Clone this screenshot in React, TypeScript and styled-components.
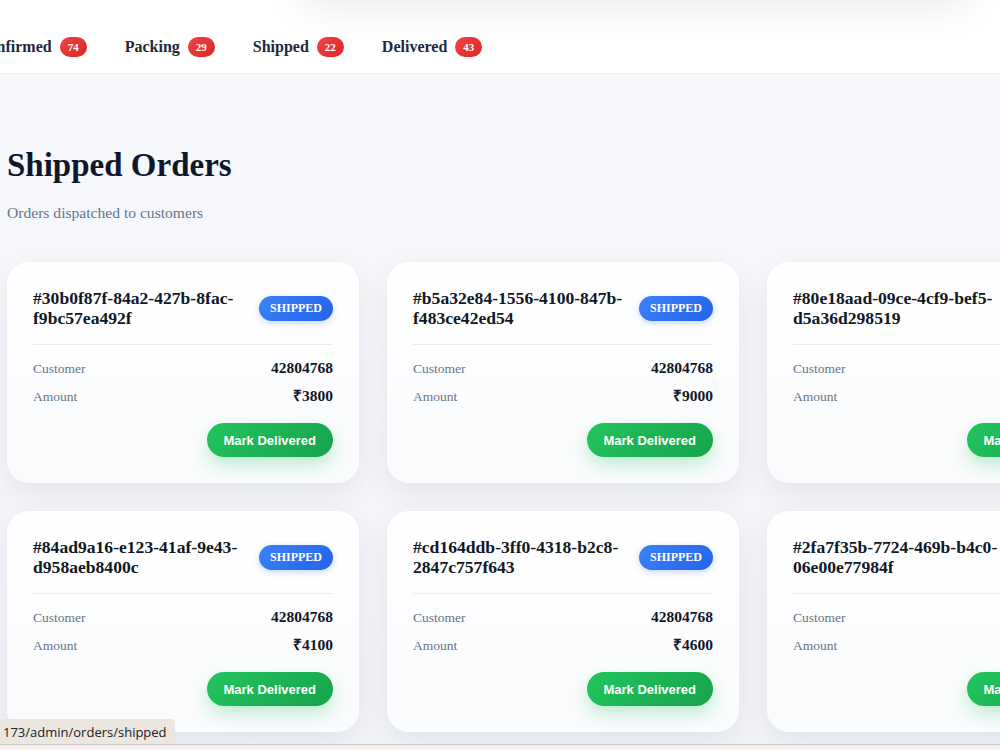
import styled, { createGlobalStyle } from "styled-components";

const GlobalStyle = createGlobalStyle`
  html, body {
    margin: 0;
    padding: 0;
    overflow: hidden;
    background: #f7f9fc;
    font-family: "Liberation Serif", "Times New Roman", serif;
  }
  * {
    box-sizing: border-box;
  }
`;

const Page = styled.div`
  min-height: 750px;
  background: linear-gradient(180deg, #f8f9fc 0%, #f2f4f8 100%);
`;

const TopNav = styled.nav`
  position: relative;
  height: 74px;
  background: #ffffff;
  border-bottom: 1px solid #eef0f3;
  display: flex;
  align-items: center;
  padding-top: 20px;
  overflow: hidden;

  /* shadow of the header card sitting above the tabs */
  &::before {
    content: "";
    position: absolute;
    top: -70px;
    left: 300px;
    right: 30px;
    height: 70px;
    border-radius: 24px;
    background: #ffffff;
    box-shadow: 0 6px 40px rgba(0, 0, 0, 0.09);
  }
`;

const TabStrip = styled.div`
  display: flex;
  align-items: center;
  gap: 38px;
  margin-left: -23px;
`;

const Tab = styled.div`
  display: flex;
  align-items: center;
  gap: 8px;
  font-size: 16px;
  font-weight: 700;
  color: #1e293b;
  white-space: nowrap;
`;

const CountBadge = styled.span`
  display: inline-flex;
  align-items: center;
  justify-content: center;
  height: 20px;
  min-width: 27px;
  padding: 0 6px;
  border-radius: 10px;
  background: linear-gradient(135deg, #ef4444, #dc2626);
  color: #ffffff;
  font-size: 11px;
  font-weight: 700;
`;

const Main = styled.main`
  padding: 72px 0 0 7px;
`;

const Title = styled.h1`
  margin: 0;
  font-size: 33px;
  line-height: 38px;
  font-weight: 700;
  color: #0f172a;
`;

const Subtitle = styled.p`
  margin: 20px 0 0;
  font-size: 15.6px;
  line-height: 18px;
  color: #64748b;
`;

const Grid = styled.div`
  margin-top: 40px;
  display: grid;
  grid-template-columns: repeat(3, 352px);
  gap: 28px;
`;

const Card = styled.div`
  background: linear-gradient(180deg, #ffffff 0%, #fafbfd 100%);
  border-radius: 22px;
  padding: 26px;
  box-shadow: 0 10px 30px rgba(15, 23, 42, 0.08);
  display: flex;
  flex-direction: column;
`;

const CardHeader = styled.div`
  display: flex;
  justify-content: space-between;
  align-items: center;
  gap: 14px;
  padding-bottom: 16px;
  border-bottom: 1px solid #e8ecf1;
`;

const OrderId = styled.div`
  flex: 1;
  font-size: 17.6px;
  line-height: 20px;
  font-weight: 700;
  color: #111827;
  word-break: break-word;
`;

const StatusPill = styled.span`
  flex-shrink: 0;
  padding: 6px 11px;
  border-radius: 13px;
  background: linear-gradient(135deg, #3b82f6, #2563eb);
  color: #ffffff;
  font-size: 12px;
  line-height: 13px;
  font-weight: 700;
  box-shadow: 0 2px 6px rgba(37, 99, 235, 0.25);
`;

const Details = styled.div`
  display: flex;
  flex-direction: column;
  gap: 6px;
  padding-top: 12px;
`;

const DetailRow = styled.div`
  display: flex;
  justify-content: space-between;
  align-items: baseline;
  line-height: 21px;
`;

const Label = styled.span`
  font-size: 13.5px;
  color: #64748b;
`;

const Value = styled.span`
  font-size: 15.5px;
  font-weight: 700;
  color: #111827;
`;

const Actions = styled.div`
  display: flex;
  justify-content: flex-end;
  margin-top: 16px;
`;

const DeliverButton = styled.button`
  height: 34px;
  padding: 0 17px;
  border: none;
  border-radius: 17px;
  background: linear-gradient(135deg, #22c55e, #16a34a);
  color: #ffffff;
  font-family: "Liberation Sans", Arial, sans-serif;
  font-size: 13px;
  font-weight: 700;
  cursor: pointer;
  box-shadow: 0 8px 18px rgba(34, 197, 94, 0.28);
`;

const StatusLink = styled.div`
  position: fixed;
  left: 0;
  bottom: 6px;
  height: 25px;
  padding: 0 8px 0 3px;
  display: flex;
  align-items: center;
  background: #ece6e0;
  border-top-right-radius: 4px;
  font-family: "Open Sans", "Noto Sans", sans-serif;
  font-size: 13px;
  color: #222222;
`;

const BottomEdge = styled.div`
  position: fixed;
  left: 0;
  right: 0;
  bottom: 0;
  height: 6px;
  background: #f6eeee;
  border-top: 1px solid #c9c9c9;
`;

type Order = {
  id: string;
  customer: string;
  amount: number;
};

const tabs = [
  { name: "Confirmed", count: 74 },
  { name: "Packing", count: 29 },
  { name: "Shipped", count: 22 },
  { name: "Delivered", count: 43 },
];

const orders: Order[] = [
  { id: "30b0f87f-84a2-427b-8fac-f9bc57ea492f", customer: "42804768", amount: 3800 },
  { id: "b5a32e84-1556-4100-847b-f483ce42ed54", customer: "42804768", amount: 9000 },
  { id: "80e18aad-09ce-4cf9-bef5-d5a36d298519", customer: "42804768", amount: 5200 },
  { id: "84ad9a16-e123-41af-9e43-d958aeb8400c", customer: "42804768", amount: 4100 },
  { id: "cd164ddb-3ff0-4318-b2c8-2847c757f643", customer: "42804768", amount: 4600 },
  { id: "2fa7f35b-7724-469b-b4c0-06e00e77984f", customer: "42804768", amount: 2700 },
];

const App = () => {
  return (
    <Page>
      <GlobalStyle />
      <TopNav>
        <TabStrip>
          {tabs.map((t) => (
            <Tab key={t.name}>
              {t.name}
              <CountBadge>{t.count}</CountBadge>
            </Tab>
          ))}
        </TabStrip>
      </TopNav>
      <Main>
        <Title>Shipped Orders</Title>
        <Subtitle>Orders dispatched to customers</Subtitle>
        <Grid>
          {orders.map((o) => (
            <Card key={o.id}>
              <CardHeader>
                <OrderId>#{o.id}</OrderId>
                <StatusPill>SHIPPED</StatusPill>
              </CardHeader>
              <Details>
                <DetailRow>
                  <Label>Customer</Label>
                  <Value>{o.customer}</Value>
                </DetailRow>
                <DetailRow>
                  <Label>Amount</Label>
                  <Value>₹{o.amount}</Value>
                </DetailRow>
              </Details>
              <Actions>
                <DeliverButton>Mark Delivered</DeliverButton>
              </Actions>
            </Card>
          ))}
        </Grid>
      </Main>
      <StatusLink>173/admin/orders/shipped</StatusLink>
      <BottomEdge />
    </Page>
  );
};

export default App;
